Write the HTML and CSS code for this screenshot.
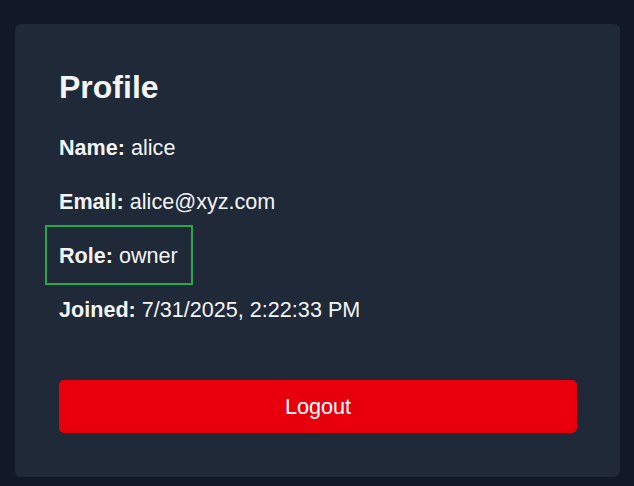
FILE: index.html
```html
<!DOCTYPE html>
<html lang="en">
<head>
<meta charset="utf-8">
<title>Profile</title>
<link rel="stylesheet" href="styles.css">
</head>
<body>
  <main class="card">
    <h1 class="title">Profile</h1>
    <div class="fields">
      <p class="field"><strong>Name:</strong> alice</p>
      <p class="field"><strong>Email:</strong> alice@xyz.com</p>
      <p class="field highlight"><span class="highlight-inner"><strong>Role:</strong> owner</span></p>
      <p class="field"><strong>Joined:</strong> 7/31/2025, 2:22:33 PM</p>
    </div>
    <button class="logout" type="button">Logout</button>
  </main>
</body>
</html>
```
FILE: styles.css
```css
html, body {
  margin: 0;
  padding: 0;
}
body {
  background: #111827;
  font-family: "Liberation Sans", Arial, sans-serif;
  color: #f3f4f6;
  padding: 24px 14px 9px 15px;
  min-height: 486px;
  box-sizing: border-box;
}
.card {
  background: #1f2937;
  border-radius: 6px;
  padding: 39px 43px 44px 44px;
  display: flex;
  flex-direction: column;
}
.title {
  margin: 0 0 21px;
  font-size: 32px;
  line-height: 48px;
  font-weight: bold;
}
.fields {
  display: flex;
  flex-direction: column;
  gap: 21.6px;
}
.field {
  margin: 0;
  font-size: 21.6px;
  line-height: 32.4px;
}
.field strong {
  font-weight: bold;
}
.highlight-inner {
  position: relative;
  display: inline-block;
}
.highlight-inner::after {
  content: "";
  position: absolute;
  top: -15px;
  bottom: -13px;
  left: -14px;
  right: -15px;
  border: 2.5px solid #28a74f;
  pointer-events: none;
}
.logout {
  margin-top: 53.6px;
  height: 53px;
  border: none;
  border-radius: 5px;
  background: #e7000b;
  color: #ffffff;
  font-family: "Liberation Sans", Arial, sans-serif;
  font-size: 21.6px;
  padding: 0;
  cursor: pointer;
}
```
